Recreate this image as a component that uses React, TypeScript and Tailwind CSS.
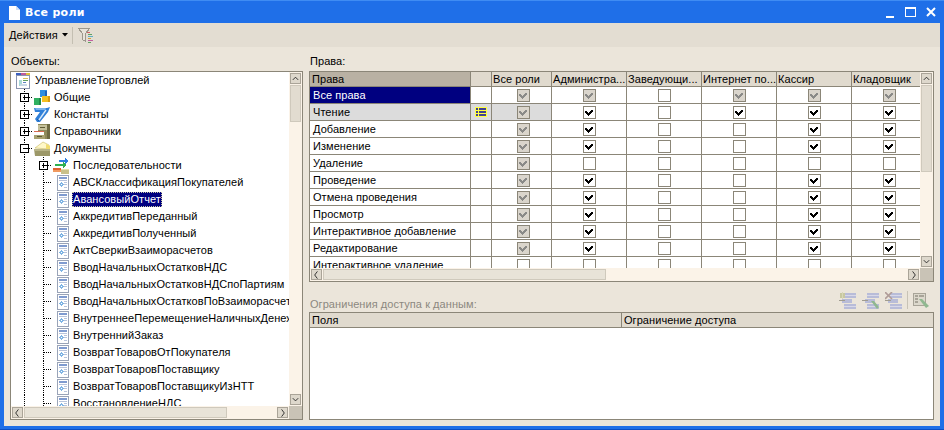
import React from "react";

function Chevron({ dir }: { dir: "up" | "down" | "left" | "right" }) {
  const pts = {
    up: "2,6 5,3 8,6",
    down: "2,3 5,6 8,3",
    left: "6,1 3,5 6,9",
    right: "4,1 7,5 4,9",
  }[dir];
  return (
    <svg width="10" height="10" viewBox="0 0 10 10">
      <polyline points={pts} fill="none" stroke="#222" strokeWidth="1" />
    </svg>
  );
}

function SBtn({ dir }: { dir: "up" | "down" | "left" | "right" }) {
  return (
    <div className="w-[11px] h-[11px] shrink-0 flex items-center justify-center bg-[#ded8cc] border border-[#aaa498]">
      <Chevron dir={dir} />
    </div>
  );
}

function VScroll({ thumb }: { thumb: number }) {
  return (
    <div className="w-[13px] shrink-0 h-full bg-[#fbf3e8] flex flex-col items-center pt-[1px] pb-[1px]">
      <SBtn dir="up" />
      <div className="w-[11px] mt-[1px] bg-[#e2dcd0] border border-[#cfc9bc] shrink-0" style={{ height: thumb }} />
      <div className="flex-1" />
      <SBtn dir="down" />
    </div>
  );
}

function HScroll({ thumb }: { thumb: number }) {
  return (
    <div className="h-[13px] shrink-0 flex bg-[#fbf3e8]">
      <div className="flex-1 flex items-center pl-[1px] pr-[1px] min-w-0">
        <SBtn dir="left" />
        <div className="h-[11px] ml-[1px] bg-[#e8e3d8] border border-[#cfc9bc] shrink-0" style={{ width: thumb }} />
        <div className="flex-1" />
        <SBtn dir="right" />
      </div>
      <div className="w-[13px] bg-[#c9c3b6]" />
    </div>
  );
}

type Kind = "root" | "l1plus" | "l1minus" | "l2plus" | "leaf";

function Lead({ kind }: { kind: Kind }) {
  if (kind === "root") return <div className="w-[4px] shrink-0" />;
  const l2 = kind === "l2plus" || kind === "leaf";
  const w = l2 ? 42 : 23;
  const dots = "1 1";
  const cx = l2 ? 32.5 : 13.5;
  const box = kind !== "leaf";
  return (
    <svg width={w} height="17" viewBox={`0 0 ${w} 17`} className="shrink-0" shapeRendering="crispEdges">
      <line x1="13.5" y1="0" x2="13.5" y2="17" stroke="#000" strokeDasharray={dots} />
      {l2 && <line x1="32.5" y1="0" x2="32.5" y2="17" stroke="#000" strokeDasharray={dots} />}
      <line x1={cx} y1="8.5" x2={w - 1} y2="8.5" stroke="#000" strokeDasharray={dots} />
      {box && (
        <>
          <rect x={cx - 4} y="4.5" width="8" height="8" fill="#fff" stroke="#000" />
          <line x1={cx - 2} y1="8.5" x2={cx + 3} y2="8.5" stroke="#000" />
          {kind !== "l1minus" && <line x1={cx} y1="6" x2={cx} y2="11" stroke="#000" />}
        </>
      )}
    </svg>
  );
}

function RootIcon() {
  return (
    <svg width="16" height="16" viewBox="0 0 16 16" shapeRendering="crispEdges" className="shrink-0">
      <rect x="1.5" y="2.5" width="13" height="13" fill="#fff" stroke="#8a94b0" />
      <rect x="1" y="0" width="5" height="2" fill="#3a5fc0" />
      <rect x="6" y="0" width="5" height="2" fill="#c05a9a" />
      <rect x="11" y="0" width="4" height="2" fill="#e0c040" />
      <rect x="4" y="7" width="3" height="6" fill="#a8d8d8" />
      <rect x="8" y="5" width="5" height="1" fill="#d8c060" />
      <rect x="8" y="7" width="5" height="1" fill="#60a060" />
      <rect x="8" y="9" width="3" height="1" fill="#6080c0" />
      <rect x="5" y="11" width="7" height="2" fill="#c8d8e8" />
    </svg>
  );
}
function CommonIcon() {
  return (
    <svg width="16" height="16" viewBox="0 0 16 16" shapeRendering="crispEdges" className="shrink-0">
      <rect x="6" y="0" width="7" height="7" fill="#2f8fe0" />
      <rect x="11" y="1" width="2" height="6" fill="#1f63b8" />
      <rect x="8" y="6" width="8" height="6" fill="#f4c020" />
      <rect x="14" y="6" width="2" height="6" fill="#d89a10" />
      <rect x="0" y="8" width="7" height="7" fill="#2fb060" />
      <rect x="5" y="8" width="2" height="7" fill="#1f8a48" />
    </svg>
  );
}
function ConstIcon() {
  return (
    <svg width="16" height="16" viewBox="0 0 16 16" className="shrink-0">
      <path d="M0 1 H13 L16 0 L14 5 L6 15 H3 L1 12 L6 5 H1 Z" fill="#2f7fd8" />
      <path d="M1 1 H12 L11 3 H2 Z" fill="#7ab4ec" />
      <path d="M12 3 L5 13" stroke="#d8e8f8" strokeWidth="1.4" />
      <path d="M3 12 L5 14" stroke="#1c5aa8" strokeWidth="1" />
    </svg>
  );
}
function CabinetIcon() {
  return (
    <svg width="16" height="16" viewBox="0 0 16 16" shapeRendering="crispEdges" className="shrink-0">
      <rect x="4" y="0" width="12" height="15" fill="#8f8a5a" />
      <rect x="13" y="0" width="3" height="15" fill="#6e6a42" />
      <rect x="4" y="1" width="9" height="5" fill="#c4c09a" />
      <rect x="6" y="3" width="5" height="1" fill="#5e5a36" />
      <rect x="0" y="7" width="10" height="4" fill="#fff" />
      <rect x="0" y="7" width="10" height="1" fill="#d86a50" />
      <rect x="0" y="11" width="11" height="4" fill="#a8a270" />
      <rect x="3" y="12" width="5" height="1" fill="#5e5a36" />
    </svg>
  );
}
function FolderIcon() {
  return (
    <svg width="16" height="16" viewBox="0 0 16 16" className="shrink-0">
      <path d="M1 7 L9 1 L15 4 V8 Z" fill="#fff8c8" stroke="#c8b860" strokeWidth="0.6" />
      <path d="M12 3 L16 5 V10 H12 Z" fill="#f0dc70" />
      <path d="M0 8 H16 V15 H1 Z" fill="#9c9868" />
      <path d="M0 8 H16 V10 H0 Z" fill="#b8b488" />
    </svg>
  );
}
function SeqIcon() {
  return (
    <svg width="16" height="16" viewBox="0 0 16 16" shapeRendering="crispEdges" className="shrink-0">
      <rect x="6" y="2" width="7" height="2" fill="#2f7fe0" />
      <polygon points="12,0 16,3 12,6" fill="#2f7fe0" />
      <rect x="2" y="6" width="9" height="2" fill="#2fb050" />
      <polygon points="10,4 14,7 10,10" fill="#2fb050" />
      <rect x="0" y="10" width="8" height="2" fill="#e0602f" />
      <rect x="0" y="12" width="8" height="2" fill="#f09a60" />
      <rect x="8" y="11" width="8" height="5" fill="#c8c08a" />
      <rect x="8" y="11" width="8" height="1" fill="#e8e0a8" />
    </svg>
  );
}
function DocIcon() {
  return (
    <svg width="16" height="16" viewBox="0 0 16 16" shapeRendering="crispEdges" className="shrink-0">
      <rect x="4.5" y="0.5" width="11" height="15" fill="#fff" stroke="#9aa4b8" />
      <rect x="6" y="2" width="8" height="2" fill="#7f9bd0" />
      <rect x="6" y="5" width="8" height="1" fill="#b8c4dc" />
      <rect x="11" y="7" width="3" height="1" fill="#b8c4dc" />
      <rect x="11" y="9" width="3" height="1" fill="#b8c4dc" />
      <rect x="11" y="12" width="3" height="1" fill="#b8c4dc" />
      <polygon points="8.5,7 11,9.5 8.5,12 6,9.5" fill="#7fb4e4" />
      <rect x="8" y="9" width="1" height="1" fill="#fff" />
    </svg>
  );
}

function TreeRow({
  kind,
  icon,
  label,
  selected,
}: {
  kind: Kind;
  icon: React.ReactNode;
  label: string;
  selected?: boolean;
}) {
  return (
    <div className="h-[17px] flex items-center whitespace-nowrap">
      <Lead kind={kind} />
      {icon}
      <span
        className={
          selected
            ? "ml-[3px] h-[15px] leading-[13px] bg-[#000080] text-white border border-dotted border-[#c8c8a0]"
            : "ml-[4px] leading-[15px]"
        }
      >
        {label}
      </span>
    </div>
  );
}

const docs = [
  "АВСКлассификацияПокупателей",
  "АвансовыйОтчет",
  "АккредитивПереданный",
  "АккредитивПолученный",
  "АктСверкиВзаиморасчетов",
  "ВводНачальныхОстатковНДС",
  "ВводНачальныхОстатковНДСпоПартиям",
  "ВводНачальныхОстатковПоВзаиморасчет",
  "ВнутреннееПеремещениеНаличныхДенеж",
  "ВнутреннийЗаказ",
  "ВозвратТоваровОтПокупателя",
  "ВозвратТоваровПоставщику",
  "ВозвратТоваровПоставщикуИзНТТ",
  "ВосстановлениеНДС",
];

type C = "d" | "c" | "e";

function Check({ s }: { s: C }) {
  return (
    <div
      className={
        s === "d"
          ? "w-[13px] h-[13px] border border-[#8b8678] bg-[#dad5cc] flex items-center justify-center"
          : "w-[13px] h-[13px] border border-[#8b8678] bg-white flex items-center justify-center"
      }
    >
      {s !== "e" && (
        <svg width="9" height="9" viewBox="0 0 9 9" shapeRendering="crispEdges">
          <path
            d="M0 3h2v1h1v1h1V4h1V3h1V2h2v2H7v1H6v1H5v1H4v1H3V7H2V6H1V5H0z"
            fill={s === "d" ? "#8a8a88" : "#000"}
          />
        </svg>
      )}
    </div>
  );
}

const rights: { name: string; c: C[] }[] = [
  { name: "Все права", c: ["d", "d", "e", "d", "d", "d"] },
  { name: "Чтение", c: ["d", "c", "e", "c", "c", "c"] },
  { name: "Добавление", c: ["d", "c", "e", "e", "c", "c"] },
  { name: "Изменение", c: ["d", "c", "e", "e", "c", "c"] },
  { name: "Удаление", c: ["d", "e", "e", "e", "e", "e"] },
  { name: "Проведение", c: ["d", "c", "e", "e", "c", "c"] },
  { name: "Отмена проведения", c: ["d", "c", "e", "e", "c", "c"] },
  { name: "Просмотр", c: ["d", "c", "e", "e", "c", "c"] },
  { name: "Интерактивное добавление", c: ["d", "c", "e", "e", "c", "c"] },
  { name: "Редактирование", c: ["d", "c", "e", "e", "c", "c"] },
  { name: "Интерактивное удаление", c: ["e", "e", "e", "e", "e", "e"] },
];

const heads = ["Все роли", "Администра...", "Заведующи...", "Интернет по...", "Кассир", "Кладовщик"];

function ListMark() {
  return (
    <svg width="12" height="10" viewBox="0 0 12 10" shapeRendering="crispEdges">
      <rect width="12" height="10" fill="#ffff40" />
      <rect x="1" y="1" width="2" height="2" fill="#404090" />
      <rect x="4" y="1" width="7" height="2" fill="#404090" />
      <rect x="1" y="4" width="2" height="2" fill="#404090" />
      <rect x="4" y="4" width="7" height="2" fill="#404090" />
      <rect x="1" y="7" width="2" height="2" fill="#404090" />
      <rect x="4" y="7" width="7" height="2" fill="#404090" />
    </svg>
  );
}

function Bars({ deco }: { deco: "add" | "edit" | "del" }) {
  return (
    <svg width="17" height="17" viewBox="0 0 17 17" shapeRendering="crispEdges" className="shrink-0">
      <rect x="5" y="1" width="12" height="5" fill="#b8bcd8" />
      <rect x="5" y="3" width="12" height="1" fill="#d8d8e8" />
      <rect x="3" y="7" width="10" height="4" fill="#b8bcd8" />
      <rect x="0" y="8" width="6" height="1" fill="#a09c90" />
      <rect x="5" y="12" width="12" height="5" fill="#b8bcd8" />
      <rect x="5" y="14" width="12" height="1" fill="#d8d8e8" />
      {deco === "add" && <rect x="1" y="1" width="5" height="5" fill="#c8c8a0" />}
      {deco === "add" && <rect x="3" y="0" width="1" height="7" fill="#d8d8b8" />}
      {deco === "edit" && <polygon points="9,9 12,9 17,15 15,17" fill="#90b890" shapeRendering="auto" />}
      {deco === "del" && <path d="M0 0 L7 7 M7 0 L0 7" stroke="#b09c98" strokeWidth="1.6" shapeRendering="auto" />}
    </svg>
  );
}

function TableIcon() {
  return (
    <svg width="16" height="17" viewBox="0 0 16 17" shapeRendering="crispEdges" className="shrink-0">
      <rect x="0.5" y="1.5" width="12" height="12" fill="#dcd8cc" stroke="#a8a498" />
      <rect x="2" y="3" width="3" height="2" fill="#a8a498" />
      <rect x="6" y="3" width="5" height="2" fill="#a8a498" />
      <rect x="2" y="6" width="3" height="2" fill="#a8a498" />
      <rect x="2" y="9" width="3" height="2" fill="#a8a498" />
      <polygon points="6,7 9,7 16,14 13,16" fill="#90b890" shapeRendering="auto" />
    </svg>
  );
}

function FilterIcon() {
  return (
    <svg width="17" height="17" viewBox="0 0 17 17" shapeRendering="crispEdges" className="shrink-0">
      <path d="M0.5 1.5 H11.5 L7.5 6.5 V14.5 L4.5 12.5 V6.5 Z" fill="#e8e4da" stroke="#9c988c" />
      <rect x="9" y="5" width="3" height="1" fill="#d06060" />
      <rect x="10" y="7" width="4" height="1" fill="#60a060" />
      <rect x="10" y="9" width="5" height="1" fill="#60b0c0" />
      <rect x="10" y="11" width="3" height="1" fill="#d0a040" />
      <rect x="10" y="13" width="5" height="1" fill="#c060a0" />
      <rect x="10" y="15" width="3" height="1" fill="#60a060" />
    </svg>
  );
}

function cellBg(i: number) {
  return i === 1 ? "bg-[#dcdcdc]" : "bg-white";
}

export default function App() {
  return (
    <div className="w-[944px] h-[430px] overflow-hidden flex flex-col bg-[#1f6fe8] border-t border-t-[#3f8cf3] border-b border-b-[#0c4fc4] font-['Liberation_Sans',sans-serif] text-[11px] tracking-[0.06px] text-black">
      <div className="h-[22px] shrink-0 flex items-center pl-[9px]">
        <svg width="11" height="14" viewBox="0 0 11 14" className="shrink-0 mt-[2px]">
          <path d="M0 0 H7 L11 4 V14 H0 Z" fill="#fff" />
          <path d="M7 0 V4 H11" fill="#cfe0f8" />
        </svg>
        <span className="ml-[5px] mt-[2px] text-white font-bold text-[11px] tracking-[0.3px] font-['DejaVu_Sans',sans-serif]">Все роли</span>
        <div className="flex-1" />
        <svg width="60" height="14" viewBox="0 0 60 14" shapeRendering="crispEdges" className="mr-[7px]">
          <rect x="9" y="11" width="8" height="2" fill="#fff" />
          <rect x="28.5" y="2.5" width="10" height="9" fill="none" stroke="#fff" />
          <rect x="28" y="2" width="11" height="2" fill="#fff" />
          <path d="M50 3 L58 11 M58 3 L50 11" stroke="#fff" strokeWidth="2" shapeRendering="auto" />
        </svg>
      </div>

      <div className="flex-1 mx-[4px] mb-[3px] flex flex-col bg-[#ebe5da] min-h-0">
        <div className="h-[24px] shrink-0 bg-[#e3ddd2] flex items-center pl-[5px]">
          <span>Действия</span>
          <svg width="6" height="4" viewBox="0 0 6 4" className="ml-[4px]">
            <polygon points="0,0 6,0 3,3.5" fill="#000" />
          </svg>
          <div className="w-[1px] h-[17px] bg-[#c4bfb2] ml-[4px]" />
          <div className="ml-[5px]">
            <FilterIcon />
          </div>
        </div>

        <div className="flex-1 flex min-h-0 pl-[6px] pr-[6px] pb-[6px] gap-[6px]">
          {/* left column */}
          <div className="w-[293px] shrink-0 flex flex-col">
            <div className="h-[24px] shrink-0 flex items-end pl-[1px] pb-[2px] leading-[15px]">Объекты:</div>
            <div className="flex-1 border border-[#8b8678] flex flex-col min-h-0 bg-white">
              <div className="flex-1 flex min-h-0">
                <div className="flex-1 overflow-hidden min-w-0">
                  <TreeRow kind="root" icon={<RootIcon />} label="УправлениеТорговлей" />
                  <TreeRow kind="l1plus" icon={<CommonIcon />} label="Общие" />
                  <TreeRow kind="l1plus" icon={<ConstIcon />} label="Константы" />
                  <TreeRow kind="l1plus" icon={<CabinetIcon />} label="Справочники" />
                  <TreeRow kind="l1minus" icon={<FolderIcon />} label="Документы" />
                  <TreeRow kind="l2plus" icon={<SeqIcon />} label="Последовательности" />
                  {docs.map((d) => (
                    <TreeRow key={d} kind="leaf" icon={<DocIcon />} label={d} selected={d === "АвансовыйОтчет"} />
                  ))}
                </div>
                <VScroll thumb={37} />
              </div>
              <HScroll thumb={203} />
            </div>
          </div>

          {/* right column */}
          <div className="flex-1 flex flex-col min-w-0">
            <div className="h-[24px] shrink-0 flex items-end pl-[1px] pb-[2px] leading-[15px]">Права:</div>
            <div className="h-[211px] shrink-0 border border-[#8b8678] flex flex-col bg-white">
              <div className="flex-1 flex min-h-0">
                <div className="flex-1 overflow-hidden min-w-0 grid grid-cols-[161px_21px_60px_75px_75px_75px_75px_75px] auto-rows-[17px] grid-rows-[15px]">
                  <div className="border-b border-r border-[#8b8678] bg-[#b9b1a3] pl-[2px] leading-[14px]">Права</div>
                  <div className="border-b border-r border-[#8b8678] bg-[#e0dace]" />
                  {heads.map((h) => (
                    <div
                      key={h}
                      className="border-b border-r border-[#8b8678] bg-[#e0dace] pl-[1px] leading-[14px] whitespace-nowrap overflow-hidden"
                    >
                      {h}
                    </div>
                  ))}
                  {rights.map((r, i) => (
                    <React.Fragment key={r.name}>
                      <div
                        className={
                          i === 0
                            ? "border-b border-r border-[#8b8678] bg-[#000080] text-white pl-[3px] leading-[17px] whitespace-nowrap"
                            : `border-b border-r border-[#8b8678] ${cellBg(i)} pl-[3px] leading-[17px] whitespace-nowrap`
                        }
                      >
                        {r.name}
                      </div>
                      <div className={`border-b border-r border-[#8b8678] ${cellBg(i)} flex items-center justify-center`}>
                        {i === 1 && <ListMark />}
                      </div>
                      {r.c.map((s, j) => (
                        <div
                          key={j}
                          className={
                            j === 0
                              ? `border-b border-r border-[#8b8678] ${cellBg(i)} flex items-center justify-center pl-[3px]`
                              : "border-b border-r border-[#8b8678] bg-white flex items-center justify-center"
                          }
                        >
                          <Check s={s} />
                        </div>
                      ))}
                    </React.Fragment>
                  ))}
                </div>
                <VScroll thumb={87} />
              </div>
              <HScroll thumb={283} />
            </div>

            <div className="h-[30px] shrink-0 flex items-end justify-between">
              <span className="pl-[1px] leading-[15px] text-[#8c8880]">Ограничения доступа к данным:</span>
              <div className="flex items-center pr-[5px] pb-[3px]">
                <Bars deco="add" />
                <div className="w-[6px]" />
                <Bars deco="edit" />
                <div className="w-[6px]" />
                <Bars deco="del" />
                <div className="w-[1px] h-[18px] bg-[#c8c3b6] mx-[5px]" />
                <TableIcon />
              </div>
            </div>

            <div className="flex-1 border border-[#8b8678] bg-white flex flex-col min-h-0">
              <div className="h-[15px] shrink-0 grid grid-cols-[312px_1fr] bg-[#e0dace] border-b border-[#8b8678]">
                <div className="border-r border-[#8b8678] pl-[2px] leading-[14px]">Поля</div>
                <div className="pl-[2px] leading-[14px]">Ограничение доступа</div>
              </div>
              <div className="flex-1" />
            </div>
          </div>
        </div>
      </div>
    </div>
  );
}
